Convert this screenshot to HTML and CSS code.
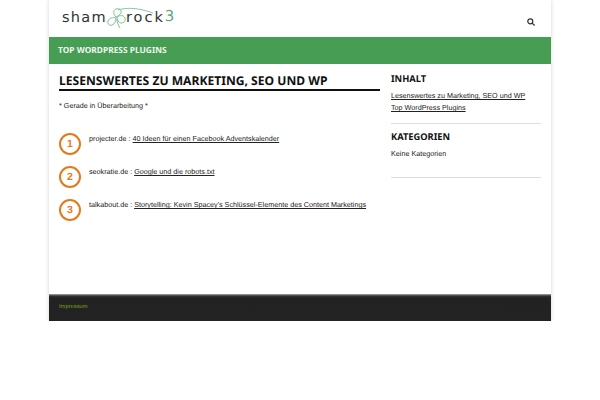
FILE: index.html
```html
<!DOCTYPE html>
<html lang="de">
<head>
  <meta charset="UTF-8" />
  <title>Lesenswertes zu Marketing, SEO und WP</title>
  <link rel="stylesheet" href="styles.css">
</head>
<body>
  <div class="wrapper">
    <header class="site-header">
      <a class="logo" href="#">
        <span class="logo-word">sham</span>
        <svg class="clover" width="48" height="22" viewBox="0 0 48 22" fill="none" stroke="#6fb98a" stroke-width="0.9">
          <path d="M9 10C6 7 6 3 9 2c3-1 6 1 5 4-1 2-3 3-5 4z"/>
          <path d="M10 10c3-2 7-2 8 1 1 3-1 5-4 5-2 0-4-3-4-6z"/>
          <path d="M9 11c-3-1-7 0-8 3-1 3 2 5 4 4 3-1 4-4 4-7z"/>
          <path d="M10 12c0 3 1 6 3 9"/>
          <path d="M11 3C20 0 32 1 46 6" stroke-width="0.8"/>
        </svg>
        <span class="logo-word logo-rock">rock</span><span class="logo-three">3</span>
      </a>
      <svg class="search" width="8" height="8" viewBox="0 0 9 9" fill="none" stroke="#333" stroke-width="1.4">
        <circle cx="3.7" cy="3.7" r="2.8"/>
        <path d="M5.8 5.8L8.5 8.5"/>
      </svg>
    </header>

    <nav class="nav-bar">
      <a href="#">TOP WORDPRESS PLUGINS</a>
    </nav>

    <div class="content">
      <main class="main-col">
        <h1>LESENSWERTES ZU MARKETING, SEO UND WP</h1>
        <p class="note">* Gerade in Überarbeitung *</p>

        <div class="item">
          <span class="num">1</span>
          <p>projecter.de : <a href="#">40 Ideen für einen Facebook Adventskalender</a></p>
        </div>
        <div class="item">
          <span class="num">2</span>
          <p>seokratie.de : <a href="#">Google und die robots.txt</a></p>
        </div>
        <div class="item">
          <span class="num">3</span>
          <p>talkabout.de : <a href="#">Storytelling: Kevin Spacey's Schlüssel-Elemente des Content Marketings</a></p>
        </div>
      </main>

      <aside class="sidebar">
        <section class="widget">
          <h2>INHALT</h2>
          <ul>
            <li><a href="#">Lesenswertes zu Marketing, SEO und WP</a></li>
            <li><a href="#">Top WordPress Plugins</a></li>
          </ul>
        </section>
        <section class="widget widget-cats">
          <h2>KATEGORIEN</h2>
          <p>Keine Kategorien</p>
        </section>
      </aside>
    </div>

    <footer class="site-footer">
      <a href="#">Impressum</a>
    </footer>
  </div>
</body>
</html>
```

FILE: styles.css
```css
* {
  margin: 0;
  padding: 0;
  box-sizing: border-box;
}

body {
  font-family: "Liberation Sans", Arial, sans-serif;
  font-size: 7.2px;
  color: #222;
  background: #fff;
  text-rendering: geometricPrecision;
}

a {
  color: #222;
}

.wrapper {
  width: 502px;
  margin: 0 auto;
  background: #fff;
  box-shadow: 0 0 4px rgba(0, 0, 0, 0.18);
}

.site-header {
  height: 37px;
  display: flex;
  align-items: center;
  justify-content: space-between;
  padding: 0 16px 0 13px;
}

.logo {
  display: flex;
  align-items: center;
  height: 30px;
  margin-top: -2px;
  font-family: "DejaVu Sans", sans-serif;
  font-size: 14.5px;
  letter-spacing: 1.3px;
  color: #333;
  text-decoration: none;
}

.clover {
  flex: none;
  margin: 0 -30px 0 0;
}

.logo-rock {
  margin-left: 1px;
  letter-spacing: 2px;
}

.logo-three {
  font-size: 15px;
  color: #5aa97c;
  margin-top: -4px;
}

.search {
  margin-top: 6px;
}

.nav-bar {
  height: 27px;
  background: #479d53;
  display: flex;
  align-items: center;
  padding-left: 9px;
}

.nav-bar a {
  font-family: "Noto Sans", sans-serif;
  font-size: 8.4px;
  font-weight: bold;
  color: #eef6ef;
  text-decoration: none;
}

.content {
  height: 230px;
  display: flex;
  justify-content: space-between;
  padding: 0 10px;
}

.main-col {
  width: 321px;
  padding-top: 7px;
}

h1 {
  font-family: "Noto Sans", sans-serif;
  font-size: 12.1px;
  line-height: 19px;
  font-weight: bold;
  color: #111;
  border-bottom: 2px solid #111;
  height: 20px;
  white-space: nowrap;
}

.note {
  margin-top: 10px;
  line-height: 10px;
}

.item {
  display: flex;
  gap: 8px;
  height: 33px;
  line-height: 10px;
}

.item p {
  padding-top: 1px;
}

.note + .item {
  margin-top: 22px;
}

.num {
  width: 22px;
  height: 22px;
  flex: none;
  border: 2px solid #e47a1c;
  border-radius: 50%;
  display: flex;
  align-items: center;
  justify-content: center;
  font-size: 10.5px;
  font-weight: bold;
  color: #e47a1c;
}

.sidebar {
  width: 150px;
  padding-top: 9px;
}

.widget {
  height: 51px;
  border-bottom: 1px solid #ddd;
}

h2 {
  font-family: "Noto Sans", sans-serif;
  font-size: 9.3px;
  line-height: 12px;
  font-weight: bold;
  color: #111;
}

.widget ul {
  list-style: none;
  margin-top: 5px;
}

.widget li {
  line-height: 12px;
}

.widget-cats {
  height: 54px;
  padding-top: 7px;
}

.widget-cats p {
  margin-top: 5px;
  line-height: 12px;
}

.site-footer {
  height: 27px;
  background: linear-gradient(#aaa, #333 2px, #222 4px, #232323);
  padding: 10px 10px 0;
  font-size: 5.8px;
}

.site-footer a {
  color: #6fa51c;
  text-decoration: none;
}
```
